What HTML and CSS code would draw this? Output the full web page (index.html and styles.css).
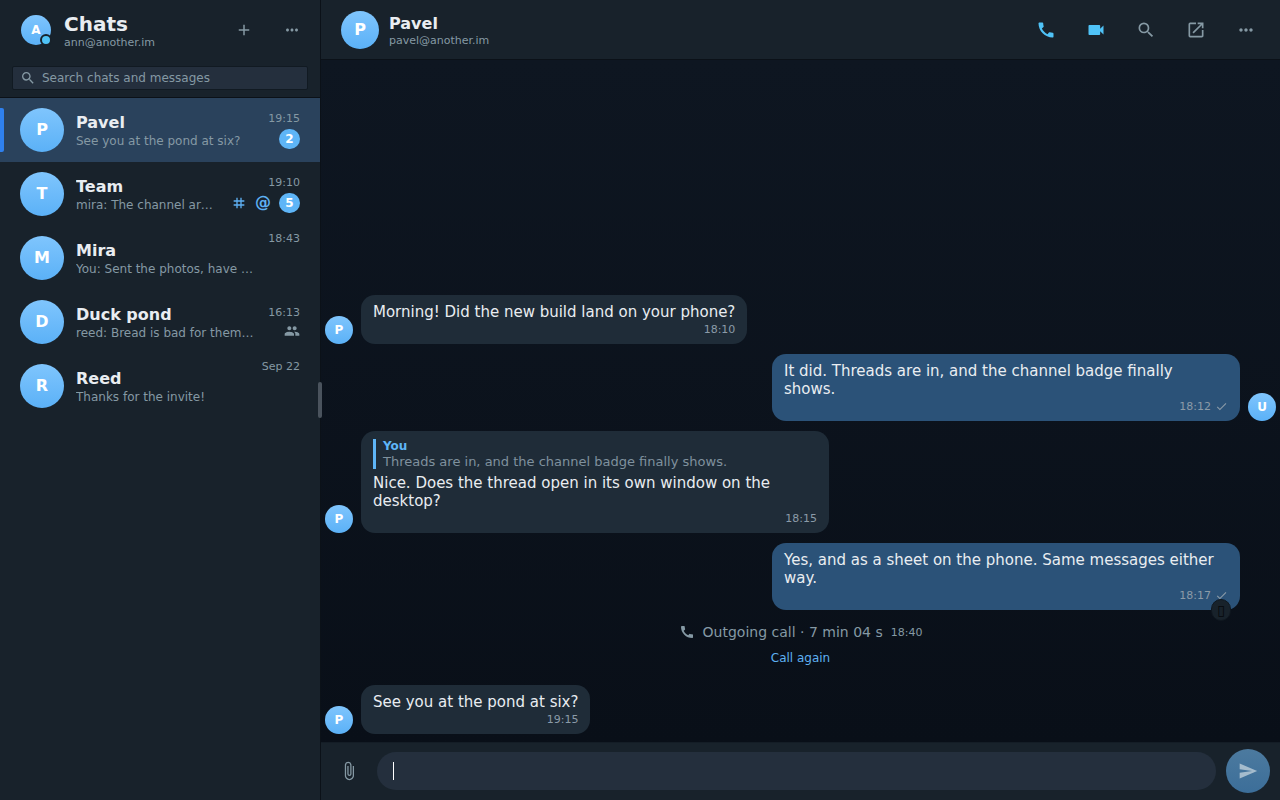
FILE: index.html
```html
<!DOCTYPE html>
<html lang="en">
<head>
  <meta charset="utf-8">
  <title>Chats</title>
  <meta content="width=device-width, initial-scale=1" name="viewport">
  <link rel="stylesheet" href="styles.css">
</head>
<body>
  <!-- Shared icons -->
  <svg class="sprite" aria-hidden="true">
    <symbol id="i-search" viewBox="0 0 24 24"><path d="M15.5 14h-.79l-.28-.27A6.47 6.47 0 0 0 16 9.5 6.5 6.5 0 1 0 9.5 16c1.61 0 3.09-.59 4.23-1.57l.27.28v.79l5 4.99L20.49 19l-4.99-5zm-6 0C7.01 14 5 11.99 5 9.5S7.01 5 9.5 5 14 7.01 14 9.5 11.99 14 9.5 14z"/></symbol>
    <symbol id="i-add" viewBox="0 0 24 24"><path d="M19 13h-6v6h-2v-6H5v-2h6V5h2v6h6v2z"/></symbol>
    <symbol id="i-more" viewBox="0 0 24 24"><path d="M6 10c-1.1 0-2 .9-2 2s.9 2 2 2 2-.9 2-2-.9-2-2-2zm12 0c-1.1 0-2 .9-2 2s.9 2 2 2 2-.9 2-2-.9-2-2-2zm-6 0c-1.1 0-2 .9-2 2s.9 2 2 2 2-.9 2-2-.9-2-2-2z"/></symbol>
    <symbol id="i-call" viewBox="0 0 24 24"><path d="M20.01 15.38c-1.23 0-2.42-.2-3.53-.56a.98.98 0 0 0-1.01.24l-1.57 1.97c-2.83-1.35-5.48-3.9-6.89-6.83l1.95-1.66c.27-.28.35-.67.24-1.02-.37-1.11-.56-2.3-.56-3.53 0-.54-.45-.99-.99-.99H4.19C3.65 3 3 3.24 3 3.99 3 13.28 10.73 21 20.01 21c.71 0 .99-.63.99-1.18v-3.45c0-.54-.45-.99-.99-.99z"/></symbol>
    <symbol id="i-video" viewBox="0 0 24 24"><path d="M17 10.5V7c0-.55-.45-1-1-1H4c-.55 0-1 .45-1 1v10c0 .55.45 1 1 1h12c.55 0 1-.45 1-1v-3.5l4 4v-11l-4 4z"/></symbol>
    <symbol id="i-open" viewBox="0 0 24 24"><path d="M19 19H5V5h7V3H5a2 2 0 0 0-2 2v14a2 2 0 0 0 2 2h14c1.1 0 2-.9 2-2v-7h-2v7zM14 3v2h3.59l-9.83 9.83 1.41 1.41L19 6.41V10h2V3h-7z"/></symbol>
    <symbol id="i-group" viewBox="0 0 24 24"><path d="M16 11c1.66 0 2.99-1.34 2.99-3S17.66 5 16 5s-3 1.34-3 3 1.34 3 3 3zm-8 0c1.66 0 2.99-1.34 2.99-3S9.66 5 8 5 5 6.34 5 8s1.34 3 3 3zm0 2c-2.33 0-7 1.17-7 3.5V19h14v-2.5c0-2.33-4.67-3.5-7-3.5zm8 0c-.29 0-.62.02-.97.05 1.16.84 1.97 1.97 1.97 3.45V19h6v-2.5c0-2.33-4.67-3.5-7-3.5z"/></symbol>
    <symbol id="i-tag" viewBox="0 0 24 24"><path d="M20 10V8h-4V4h-2v4h-4V4H8v4H4v2h4v4H4v2h4v4h2v-4h4v4h2v-4h4v-2h-4v-4h4zm-6 4h-4v-4h4v4z"/></symbol>
    <symbol id="i-check" viewBox="0 0 24 24"><path d="M9 16.17 4.83 12l-1.42 1.41L9 19 21 7l-1.41-1.41z"/></symbol>
    <symbol id="i-attach" viewBox="0 0 24 24"><path d="M16.5 6v11.5c0 2.21-1.79 4-4 4s-4-1.79-4-4V5a2.5 2.5 0 0 1 5 0v10.5c0 .55-.45 1-1 1s-1-.45-1-1V6H10v9.5a2.5 2.5 0 0 0 5 0V5c0-2.21-1.79-4-4-4S7 2.79 7 5v12.5c0 3.04 2.46 5.5 5.5 5.5s5.5-2.46 5.5-5.5V6h-1.5z"/></symbol>
    <symbol id="i-send" viewBox="0 0 24 24"><path d="M2.01 21 23 12 2.01 3 2 10l15 2-15 2z"/></symbol>
  </svg>

  <div class="app">
    <aside class="sidebar">
      <header class="account">
        <div class="avatar avatar-account">A<span class="presence"></span></div>
        <div class="title">
          <h1>Chats</h1>
          <p>ann@another.im</p>
        </div>
        <div class="account-actions">
          <button class="icon-button" type="button" aria-label="New chat"><svg class="icon"><use href="#i-add"/></svg></button>
          <button class="icon-button" type="button" aria-label="Menu"><svg class="icon"><use href="#i-more"/></svg></button>
        </div>
      </header>

      <div class="search-row">
        <label class="search">
          <svg class="icon icon-small" aria-hidden="true"><use href="#i-search"/></svg>
          <input type="search" placeholder="Search chats and messages" aria-label="Search chats and messages">
        </label>
      </div>

      <nav class="chat-list">
        <a class="chat active" href="#pavel">
          <span class="avatar">P</span>
          <span class="chat-text">
            <span class="chat-name">Pavel</span>
            <span class="preview">See you at the pond at six?</span>
          </span>
          <span class="meta">
            <time>19:15</time>
            <span class="marks"><span class="badge">2</span></span>
          </span>
        </a>
        <a class="chat" href="#team">
          <span class="avatar">T</span>
          <span class="chat-text">
            <span class="chat-name">Team</span>
            <span class="preview">mira: The channel archive</span>
          </span>
          <span class="meta">
            <time>19:10</time>
            <span class="marks">
              <svg class="icon icon-small accent"><use href="#i-tag"/></svg>
              <span class="mention">@</span>
              <span class="badge">5</span>
            </span>
          </span>
        </a>
        <a class="chat" href="#mira">
          <span class="avatar">M</span>
          <span class="chat-text">
            <span class="chat-name">Mira</span>
            <span class="preview">You: Sent the photos, have a look</span>
          </span>
          <span class="meta meta-top"><time>18:43</time></span>
        </a>
        <a class="chat" href="#duck-pond">
          <span class="avatar">D</span>
          <span class="chat-text">
            <span class="chat-name">Duck pond</span>
            <span class="preview">reed: Bread is bad for them, bring peas</span>
          </span>
          <span class="meta">
            <time>16:13</time>
            <span class="marks"><svg class="icon icon-small"><use href="#i-group"/></svg></span>
          </span>
        </a>
        <a class="chat" href="#reed">
          <span class="avatar">R</span>
          <span class="chat-text">
            <span class="chat-name">Reed</span>
            <span class="preview">Thanks for the invite!</span>
          </span>
          <span class="meta meta-top"><time>Sep 22</time></span>
        </a>
      </nav>
      <div class="resizer"></div>
    </aside>

    <main class="conversation">
      <header class="chat-header">
        <div class="avatar avatar-header">P</div>
        <div class="peer">
          <h2>Pavel</h2>
          <p>pavel@another.im</p>
        </div>
        <div class="chat-actions">
          <button class="icon-button call" type="button" aria-label="Call"><svg class="icon"><use href="#i-call"/></svg></button>
          <button class="icon-button call" type="button" aria-label="Video call"><svg class="icon"><use href="#i-video"/></svg></button>
          <button class="icon-button" type="button" aria-label="Search"><svg class="icon"><use href="#i-search"/></svg></button>
          <button class="icon-button" type="button" aria-label="Open in window"><svg class="icon"><use href="#i-open"/></svg></button>
          <button class="icon-button" type="button" aria-label="More"><svg class="icon"><use href="#i-more"/></svg></button>
        </div>
      </header>

      <section class="messages">
        <div class="message">
          <div class="avatar avatar-small">P</div>
          <div class="bubble">
            <p>Morning! Did the new build land on your phone?</p>
            <div class="stamp">18:10</div>
          </div>
        </div>
        <div class="message outgoing">
          <div class="avatar avatar-small">U</div>
          <div class="bubble">
            <p>It did. Threads are in, and the channel badge finally shows.</p>
            <div class="stamp">18:12 <svg class="tick"><use href="#i-check"/></svg></div>
          </div>
        </div>
        <div class="message">
          <div class="avatar avatar-small">P</div>
          <div class="bubble">
            <blockquote>
              <strong>You</strong>
              <span>Threads are in, and the channel badge finally shows.</span>
            </blockquote>
            <p>Nice. Does the thread open in its own window on the desktop?</p>
            <div class="stamp">18:15</div>
          </div>
        </div>
        <div class="message outgoing">
          <div class="avatar-space"></div>
          <div class="bubble">
            <p>Yes, and as a sheet on the phone. Same messages either way.</p>
            <div class="stamp">18:17 <svg class="tick"><use href="#i-check"/></svg></div>
            <span class="reaction">▯</span>
          </div>
        </div>
        <div class="call-event">
          <div class="call-line">
            <svg class="icon icon-small"><use href="#i-call"/></svg>
            <span>Outgoing call · 7 min 04 s</span>
            <time>18:40</time>
          </div>
          <button class="call-again" type="button">Call again</button>
        </div>
        <div class="message">
          <div class="avatar avatar-small">P</div>
          <div class="bubble">
            <p>See you at the pond at six?</p>
            <div class="stamp">19:15</div>
          </div>
        </div>
      </section>

      <form class="composer">
        <button class="icon-button attach" type="button" aria-label="Attach file"><svg class="icon"><use href="#i-attach"/></svg></button>
        <input type="text" class="composer-input" placeholder=" " aria-label="Message" autocomplete="off">
        <button class="send" type="submit" aria-label="Send"><svg class="icon"><use href="#i-send"/></svg></button>
      </form>
    </main>
  </div>
</body>
</html>
```
FILE: styles.css
```css
* {
  box-sizing: border-box;
}
body {
  margin: 0;
  font-family: "DejaVu Sans", sans-serif;
  font-size: 15px;
  line-height: 18px;
  background: #0c131c;
  color: #e9edf1;
}
h1, h2, p, blockquote {
  margin: 0;
}
button, input {
  font: inherit;
  color: inherit;
  border: none;
  background: none;
  padding: 0;
  outline: none;
}
button {
  cursor: pointer;
}
.sprite {
  display: none;
}
.icon {
  display: block;
  width: 20px;
  height: 20px;
  fill: currentColor;
}
.icon-small {
  width: 16px;
  height: 16px;
}
.icon-button {
  display: flex;
  align-items: center;
  justify-content: center;
  width: 40px;
  height: 40px;
  color: #8599a4;
}
.accent {
  color: #5eb0f2;
}
.avatar {
  display: flex;
  flex: none;
  align-items: center;
  justify-content: center;
  width: 44px;
  height: 44px;
  border-radius: 50%;
  background: linear-gradient(#7fc5fd, #5bb1f7);
  color: #ffffff;
  font-size: 16px;
  font-weight: bold;
}

.app {
  display: flex;
  height: 100vh;
}

/* Sidebar */
.sidebar {
  position: relative;
  display: flex;
  flex: none;
  flex-direction: column;
  width: 321px;
  border-right: 1px solid #0b1118;
  background: #18222b;
}
.account {
  display: flex;
  align-items: center;
  height: 60px;
  padding: 0 8px 0 21px;
}
.avatar-account {
  position: relative;
  width: 30px;
  height: 30px;
  font-size: 12px;
}
.presence {
  position: absolute;
  right: -1px;
  bottom: -1px;
  width: 12px;
  height: 12px;
  border: 2px solid #18222b;
  border-radius: 50%;
  background: #4fc3f7;
}
.title {
  flex: 1;
  margin-left: 13px;
}
h1 {
  font-size: 20px;
  line-height: 24px;
}
.title p, .peer p {
  color: #8599a4;
  font-size: 11px;
  line-height: 13px;
}
.account-actions {
  display: flex;
  gap: 8px;
}
.account-actions .icon {
  width: 18px;
  height: 18px;
}
.search-row {
  padding: 6px 12px 7px;
  border-bottom: 1px solid #0b1118;
}
.search {
  display: flex;
  align-items: center;
  gap: 6px;
  height: 24px;
  padding: 0 7px;
  border: 1px solid #111a22;
  border-radius: 2px;
  background: #242f3d;
  color: #8599a4;
}
.search input {
  flex: 1;
  min-width: 0;
  font-size: 12px;
}
.search input::placeholder {
  color: #8599a4;
  opacity: 1;
}
.chat {
  position: relative;
  display: flex;
  align-items: center;
  gap: 12px;
  height: 64px;
  padding: 6px 20px;
  color: inherit;
  text-decoration: none;
}
.chat.active {
  background: #2a425c;
}
.chat.active::before {
  content: "";
  position: absolute;
  left: 0;
  top: 10px;
  bottom: 10px;
  width: 4px;
  border-radius: 0 2px 2px 0;
  background: #2f80ed;
}
.chat-text {
  flex: 1;
  min-width: 0;
  padding-top: 2px;
}
.chat-name, .preview {
  display: block;
  overflow: hidden;
  white-space: nowrap;
  text-overflow: ellipsis;
}
.chat-name {
  font-size: 16px;
  font-weight: bold;
  line-height: 20px;
}
.preview {
  color: #8599a4;
  font-size: 12px;
  line-height: 16px;
}
.meta {
  display: flex;
  flex: none;
  flex-direction: column;
  align-items: flex-end;
  gap: 3px;
  color: #8599a4;
}
.meta time, .call-line time {
  font-size: 11px;
  line-height: 15px;
}
.meta-top {
  align-self: flex-start;
}
.meta-top time {
  line-height: 13px;
}
.marks {
  display: flex;
  align-items: center;
  gap: 8px;
}
.mention {
  color: #5eb0f2;
  font-size: 16px;
  font-weight: bold;
}
.badge {
  min-width: 21px;
  border-radius: 10px;
  background: #5eb5f7;
  color: #ffffff;
  font-size: 12px;
  font-weight: bold;
  line-height: 20px;
  text-align: center;
}
.resizer {
  position: absolute;
  top: 50%;
  right: -2px;
  width: 4px;
  height: 36px;
  margin-top: -18px;
  border-radius: 2px;
  background: #4a535d;
  cursor: col-resize;
}

/* Conversation */
.conversation {
  display: flex;
  flex: 1;
  flex-direction: column;
  min-width: 0;
}
.chat-header {
  display: flex;
  align-items: center;
  gap: 10px;
  height: 60px;
  padding: 0 14px 0 20px;
  border-bottom: 1px solid #0b1118;
  background: #18222b;
}
.avatar-header {
  width: 38px;
  height: 38px;
}
.peer {
  flex: 1;
  padding-top: 2px;
}
h2 {
  font-size: 16px;
  line-height: 20px;
}
.chat-actions {
  display: flex;
  gap: 10px;
}
.call {
  color: #4fc3f7;
}
.messages {
  display: flex;
  flex: 1;
  flex-direction: column;
  justify-content: flex-end;
  gap: 10px;
  min-height: 0;
  padding: 8px 4px;
  background: linear-gradient(#0e1621, #090f18);
}
.message {
  display: flex;
  align-items: flex-end;
  gap: 8px;
}
.outgoing {
  flex-direction: row-reverse;
}
.avatar-small {
  width: 28px;
  height: 28px;
  font-size: 12px;
}
.avatar-space {
  flex: none;
  width: 28px;
}
.bubble {
  position: relative;
  max-width: 468px;
  padding: 8px 12px 6px;
  border-radius: 14px;
  background: #1f2c38;
}
.outgoing .bubble {
  background: #2b5278;
}
.stamp {
  display: flex;
  align-items: center;
  justify-content: flex-end;
  gap: 4px;
  color: #8b9ba8;
  font-size: 11px;
  line-height: 17px;
}
.tick {
  width: 13px;
  height: 13px;
  fill: currentColor;
}
blockquote {
  display: flex;
  flex-direction: column;
  margin-bottom: 5px;
  padding-left: 7px;
  border-left: 3px solid #5eb5f7;
  color: #7f919e;
  font-size: 13px;
  line-height: 15px;
}
blockquote strong {
  color: #5eb5f7;
  font-size: 12px;
}
.reaction {
  position: absolute;
  right: 9px;
  bottom: -11px;
  width: 20px;
  height: 22px;
  border: 1px solid #0f171f;
  border-radius: 11px;
  background: #18222b;
  color: #05080c;
  font-size: 14px;
  line-height: 20px;
  text-align: center;
}
.call-event {
  display: flex;
  flex-direction: column;
  align-items: center;
  gap: 6px;
  padding: 2px 0 7px;
  color: #8599a4;
}
.call-line {
  display: flex;
  align-items: center;
  gap: 8px;
  font-size: 14px;
  line-height: 20px;
}
.call-again {
  color: #5eb0f2;
  font-size: 12px;
  line-height: 20px;
}

/* Composer */
.composer {
  display: flex;
  align-items: center;
  gap: 10px;
  height: 58px;
  padding: 0 10px 2px;
  border-top: 1px solid #141d26;
  background: #18222b;
}
.attach {
  width: 36px;
}
.composer-input {
  flex: 1;
  min-width: 0;
  height: 38px;
  padding: 0 16px;
  border-radius: 19px;
  background: #242f3d;
  caret-color: #ffffff;
}
/* steady cursor while the field is empty */
.composer-input:placeholder-shown {
  background: linear-gradient(#ffffff, #ffffff) 16px center / 1px 18px no-repeat #242f3d;
  caret-color: transparent;
}
.send {
  display: flex;
  align-items: center;
  justify-content: center;
  width: 44px;
  height: 44px;
  border-radius: 50%;
  background: linear-gradient(#4c7a9f, #3c6e99);
  color: #a5bccd;
}
```
